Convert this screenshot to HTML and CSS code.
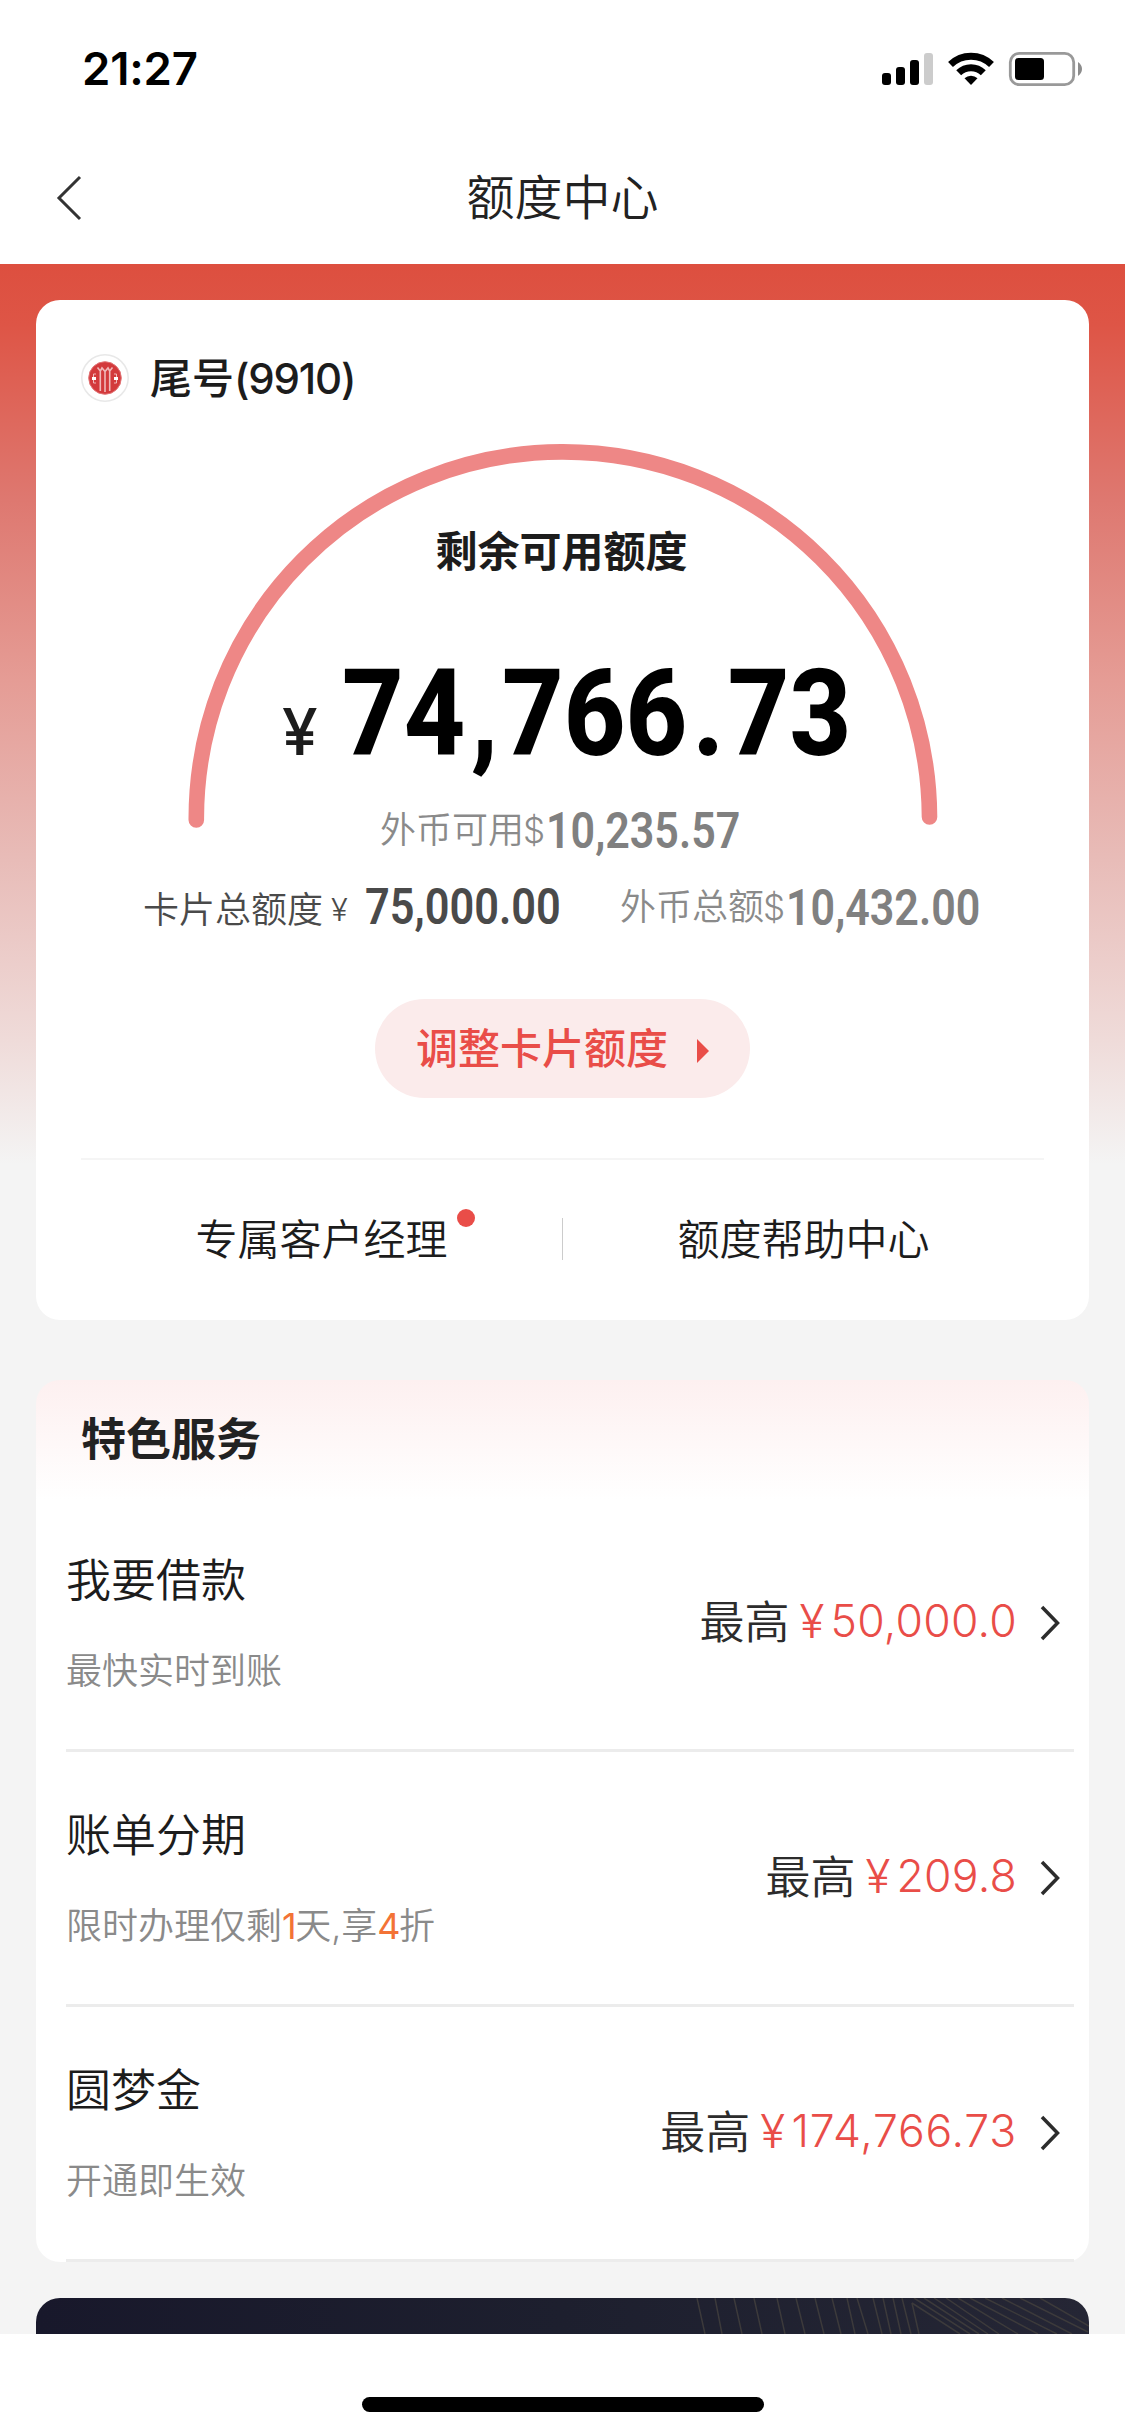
FILE: index.html
```html
<!DOCTYPE html>
<html lang="zh-CN">
<head>
<meta charset="utf-8">
<title>额度中心</title>
<link rel="stylesheet" href="styles.css">
</head>
<body>
<div class="screen">
  <header class="statusbar">
    <span class="time">21:27</span>
    <svg class="status-icons" width="202" height="36" viewBox="882 51 202 36">
      <rect x="882" y="73" width="9" height="12" rx="3"/>
      <rect x="896" y="67" width="9" height="18" rx="3"/>
      <rect x="910" y="60" width="9" height="25" rx="3"/>
      <rect x="924" y="53" width="9" height="32" rx="3" fill="#ccc"/>
      <g fill="none" stroke="#000" stroke-width="7">
        <path d="M950.5 64.5A29.500 29.500 0 0 1 991.500 64.500"/>
        <path d="M958.700 72.700A17.500 17.500 0 0 1 983.300 72.700"/>
      </g>
      <path d="M971 85L964.500 78.300A9.500 9.500 0 0 1 977.500 78.300Z"/>
      <rect x="1010.300" y="53.300" width="63.400" height="31.400" rx="9" fill="none" stroke="#999" stroke-width="2.800"/>
      <rect x="1015" y="58" width="29" height="22" rx="3.500"/>
      <path d="M1078 62Q1082 65 1082 69T1078 76Z" fill="#8c8c8c"/>
    </svg>
  </header>
  <nav class="navbar">
    <svg class="back" width="28" height="48" viewBox="0 0 28 48"><path d="M25 3L4 24L25 45"/></svg>
    <h1>额度中心</h1>
  </nav>
  <main class="content">
    <section class="card quota">
      <div class="account">
        <svg class="logo" width="50" height="50" viewBox="0 0 50 50">
          <circle cx="25" cy="25" r="23.200" fill="#fff" stroke="#e8e8e8" stroke-width="1.500"/>
          <circle cx="25" cy="25" r="16.300" fill="#d33a3c" stroke="#e27476" stroke-width="1"/>
          <g fill="none" stroke="#f0b9ba" stroke-width="1.600">
            <path d="M17.500 14.500L20.300 18V38M32.500 14.500L29.700 18V38M20.300 18L22 15L25 18.500L28 15L29.700 18M25 18.500V39"/>
            <path d="M16 21H13.500V30H16M34 21H36.500V30H34" stroke-width="1"/>
          </g>
          <path d="M12 25.500h4M34 25.500h4" stroke="#fff" stroke-width="3"/>
        </svg>
        <span class="account-name">尾号<span class="latin">(9910)</span></span>
      </div>
      <div class="gauge">
        <svg class="arc" width="752" height="386" viewBox="188 443 752 386"><path d="M197.300 819A366.600 366.600 0 0 1 930.500 816"/></svg>
        <div class="gauge-body">
          <h2>剩余可用额度</h2>
          <div class="amount"><span class="yen">¥</span><span class="din din-xl"><b>74<i>,</i>766<i>.</i>73</b></span></div>
          <div class="foreign"><span class="label">外币可用</span><span class="dollar">$</span><span class="din"><b>10,235.57</b></span></div>
        </div>
      </div>
      <div class="totals">
        <div class="total"><span class="label">卡片总额度</span><span class="yen-sm">¥</span><span class="din"><b>75,000.00</b></span></div>
        <div class="total muted"><span class="label">外币总额</span><span class="dollar">$</span><span class="din"><b>10,432.00</b></span></div>
      </div>
      <div class="adjust">调整卡片额度<svg width="12" height="24" viewBox="0 0 12 24"><path d="M0 0L12 12L0 24Z"/></svg></div>
      <div class="links">
        <div class="link"><span>专属客户经理<i class="dot"></i></span></div>
        <div class="separator"></div>
        <div class="link"><span>额度帮助中心</span></div>
      </div>
    </section>
    <section class="card services">
      <h3>特色服务</h3>
      <div class="row">
        <div class="desc"><strong>我要借款</strong><small>最快实时到账</small></div>
        <div class="value"><span class="upto">最高</span><span class="price yen-row">¥</span><span class="price">50,000.0</span><svg class="go" width="22" height="36" viewBox="0 0 22 36"><path d="M3 2L18.500 18L3 34"/></svg></div>
      </div>
      <div class="row">
        <div class="desc"><strong>账单分期</strong><small>限时办理仅剩<em>1</em>天,享<em>4</em>折</small></div>
        <div class="value"><span class="upto">最高</span><span class="price yen-row">¥</span><span class="price">209.8</span><svg class="go" width="22" height="36" viewBox="0 0 22 36"><path d="M3 2L18.500 18L3 34"/></svg></div>
      </div>
      <div class="row">
        <div class="desc"><strong>圆梦金</strong><small>开通即生效</small></div>
        <div class="value"><span class="upto">最高</span><span class="price yen-row">¥</span><span class="price wide">174,766.73</span><svg class="go" width="22" height="36" viewBox="0 0 22 36"><path d="M3 2L18.500 18L3 34"/></svg></div>
      </div>
    </section>
    <section class="banner">
      <svg width="1053" height="36" viewBox="36 2298 1053 36">
        <path d="M697 2298l8 36M715 2298l7 36M734 2298l8 36M754 2298l8 36M777 2298l8 36M796 2298l9 36M815 2298l9 36M832 2298l9 36M847 2298l8 36M857 2298l11 36M873 2298l9 36M883 2298l8 36M893 2298l8 36M902 2298l9 36M912 2303l7 31"/>
        <path d="M912 2303l48 31M914 2298l56 36M924 2298l55 36M934 2298l54 36M946 2298l53 36M958 2298l60 36M970 2298l68 36M985 2298l72 36M1002 2298l70 36M1020 2298l68 34M1040 2298l49 28"/>
      </svg>
    </section>
  </main>
  <footer class="home"><div class="home-bar"></div></footer>
</div>
</body>
</html>
```
FILE: styles.css
```css
* { box-sizing: border-box; }
body { margin: 0; background: #fff; font-family: Inter, "Noto Sans CJK SC", sans-serif; color: #1c1c1c; }
h1, h2, h3 { margin: 0; }
svg { display: block; flex: none; }
.screen { width: 1125px; height: 2436px; display: flex; flex-direction: column; overflow: hidden; }

.statusbar { height: 132px; padding: 0 41px 0 82px; display: flex; justify-content: space-between; align-items: flex-start; color: #000; }
.time { margin-top: 42px; font-size: 45.5px; line-height: 54px; font-weight: 600; letter-spacing: -0.2px; }
.status-icons { margin-top: 51px; }
.navbar { height: 132px; display: grid; grid-template-columns: 200px 1fr 200px; align-items: center; }
.back { margin-left: 55px; }
.back path { fill: none; stroke: #333; stroke-width: 3; }
.navbar h1 { font-size: 48px; line-height: 72px; font-weight: 350; text-align: center; color: #222; }

.content { height: 2070px; padding: 36px 36px 0; background: linear-gradient(#dd4f3f 0, #de5546 60px, #de7870 236px, #e59c95 416px, #e8bcb8 596px, #efdbd9 776px, #f4f4f4 900px); overflow: hidden; display: flex; flex-direction: column; }
.card { flex: none; background: #fff; border-radius: 24px; }
.quota { height: 1020px; display: flex; flex-direction: column; align-items: center; }
.account { align-self: flex-start; height: 144px; padding: 53px 0 0 44px; display: flex; align-items: flex-start; gap: 20px; }
.account-name { font-size: 42px; line-height: 51px; font-weight: 500; }
.latin { letter-spacing: -1.2px; }

.gauge { width: 751px; height: 408px; display: grid; }
.arc, .gauge-body { grid-area: 1 / 1; }
.arc path { fill: none; stroke: #ee8786; stroke-width: 15.6; stroke-linecap: round; }
.gauge-body { padding-top: 77px; display: flex; flex-direction: column; align-items: center; }
.gauge-body h2 { margin-right: 3px; font-size: 42px; line-height: 62px; font-weight: 600; }
.amount { height: 218px; align-self: stretch; padding-left: 95px; display: flex; align-items: baseline; line-height: 264px; color: #000; }
.yen { width: 60px; font-size: 64px; font-weight: 500; line-height: 1; color: #1c1c1c; }
.din { font-family: Roboto, sans-serif; font-size: 50px; line-height: 60px; width: 196px; white-space: nowrap; }
.din b { display: inline-block; font-weight: 600; transform: scaleX(.86); transform-origin: 0 50%; }
.din-xl { font-size: 121px; line-height: 262px; width: 505px; }
.din-xl b { font-weight: 800; transform: scaleX(.885); }
.din-xl i { font-style: normal; padding: 0 4px 0 6px; }
.foreign { align-self: flex-start; margin-left: 193px; display: flex; align-items: center; font-size: 36px; line-height: 60px; font-weight: 350; color: #8a8a8a; }
.foreign .din, .muted .din { color: #808080; }
.label { margin-top: -2px; }
.dollar { width: 23px; margin: -2px 0 0 -1px; font-weight: 350; font-size: 35px; }
.totals { height: 79px; align-self: stretch; padding: 21px 0 0 107px; display: flex; align-items: flex-start; }
.total { width: 477px; display: flex; align-items: center; font-size: 36px; line-height: 60px; color: #4a4a4a; font-weight: 350; white-space: nowrap; }
.total:first-child .label { margin-top: 7px; }
.yen-sm { width: 34px; margin: 7px 0 0 8px; font-size: 31px; }
.total:first-child .din b { transform: scaleX(.867); }
.muted { color: #8a8a8a; width: auto; margin-top: 5px; }
.adjust { margin-top: 68px; width: 375px; height: 99px; flex: none; border-radius: 50px; background: #fbebeb; color: #e94d48; font-size: 42px; line-height: 96px; font-weight: 500; display: flex; align-items: center; padding-left: 41px; gap: 29px; }
.adjust svg { margin-top: 4px; fill: #e94d48; }
.links { width: 963px; flex: 1; margin-top: 60px; border-top: 2px solid #f5f5f5; display: grid; grid-template-columns: 1fr 1px 1fr; }
.link { text-align: center; font-size: 42px; line-height: 159px; font-weight: 350; }
.link span { position: relative; }
.dot { position: absolute; right: -27px; top: -5px; width: 18px; height: 18px; border-radius: 50%; background: #e94d48; }
.separator { height: 42px; margin-top: 58px; background: #ccc; }

.services { height: 882px; margin-top: 60px; background: linear-gradient(#fdf0f0, #fff 120px); }
.services h3 { height: 117px; padding-left: 45px; font-size: 45px; line-height: 119px; font-weight: 700; color: #222; }
.row { height: 255px; margin: 0 15px 0 30px; border-bottom: 3px solid #ececec; display: flex; justify-content: space-between; }
.desc { display: flex; flex-direction: column; }
.desc strong { margin-top: 51px; font-size: 45px; line-height: 66px; font-weight: 350; }
.desc small { margin-top: 31px; font-size: 36px; line-height: 52px; font-weight: 350; color: #8a8a8a; }
.desc em { font-style: normal; font-weight: 400; color: #f37336; letter-spacing: -1.5px; }
.value { display: flex; align-items: center; padding-right: 13px; height: 248px; color: #2c2c2c; white-space: nowrap; }
.upto { font-size: 45px; font-weight: 350; margin-top: -4px; }
.price { font-size: 44.5px; font-weight: 340; letter-spacing: .25px; color: #e94d48; }
.wide { letter-spacing: .8px; }
.yen-row { margin: 0 6px 0 10px; font-size: 46px; }
.go { margin-left: 22px; margin-top: 3px; }
.go path { fill: none; stroke: #2c2c2c; stroke-width: 3.5; }

.banner { flex: none; margin-top: 36px; height: 36px; border-radius: 24px 24px 0 0; overflow: hidden; background: linear-gradient(90deg, #18182b, #1d1f2e 50%, #252635); }
.banner path { fill: none; stroke: #3c3a3b; stroke-width: 1.5; }
.home { height: 102px; display: flex; justify-content: center; }
.home-bar { margin-top: 63px; width: 402px; height: 15px; border-radius: 8px; background: #000; }
```
